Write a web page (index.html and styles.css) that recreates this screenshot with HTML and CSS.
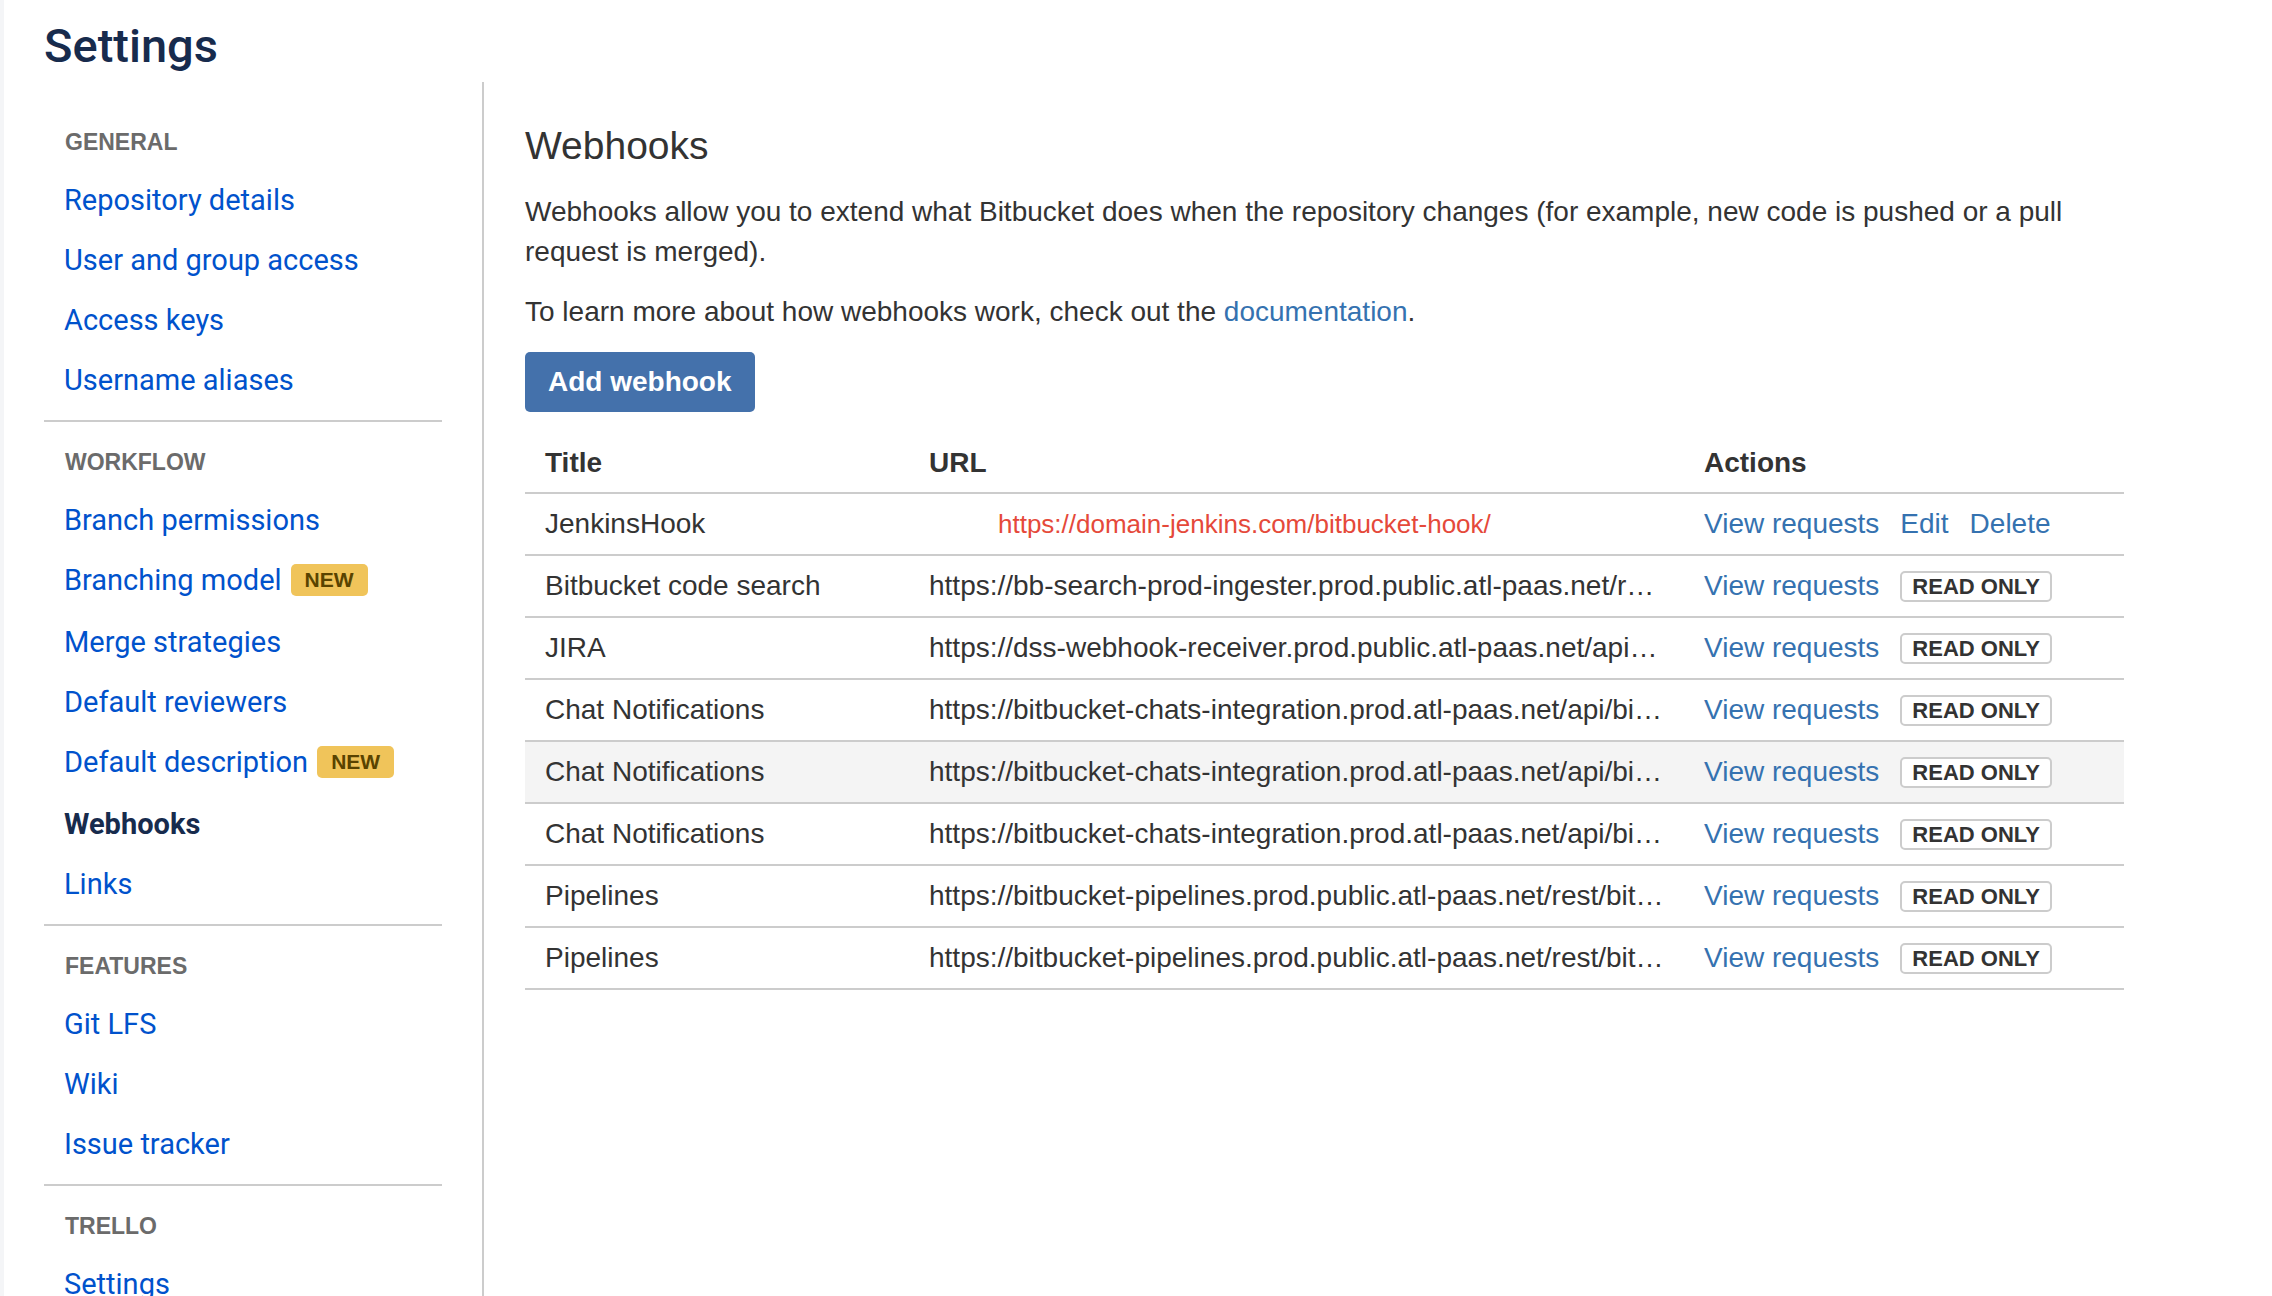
FILE: index.html
```html
<!DOCTYPE html>
<html lang="en">
<head>
<meta charset="utf-8">
<title>Settings - Webhooks</title>
<link rel="stylesheet" href="styles.css">
</head>
<body>
<div class="page">
  <div class="strip"></div>
  <aside class="sidebar">
    <h1 class="sidebar-title">Settings</h1>
    <nav class="nav">
      <div class="nav-section">
        <div class="nav-heading">GENERAL</div>
        <a class="nav-item" href="#">Repository details</a>
        <a class="nav-item" href="#">User and group access</a>
        <a class="nav-item" href="#">Access keys</a>
        <a class="nav-item" href="#">Username aliases</a>
      </div>
      <div class="nav-section">
        <div class="nav-heading">WORKFLOW</div>
        <a class="nav-item" href="#">Branch permissions</a>
        <a class="nav-item nav-item--badge" href="#">Branching model <span class="new-badge">NEW</span></a>
        <a class="nav-item" href="#">Merge strategies</a>
        <a class="nav-item" href="#">Default reviewers</a>
        <a class="nav-item nav-item--badge" href="#">Default description <span class="new-badge">NEW</span></a>
        <a class="nav-item nav-item--active" href="#">Webhooks</a>
        <a class="nav-item" href="#">Links</a>
      </div>
      <div class="nav-section">
        <div class="nav-heading">FEATURES</div>
        <a class="nav-item" href="#">Git LFS</a>
        <a class="nav-item" href="#">Wiki</a>
        <a class="nav-item" href="#">Issue tracker</a>
      </div>
      <div class="nav-section nav-section--last">
        <div class="nav-heading">TRELLO</div>
        <a class="nav-item" href="#">Settings</a>
      </div>
    </nav>
  </aside>
  <main class="main">
    <h2 class="page-heading">Webhooks</h2>
    <p class="text">Webhooks allow you to extend what Bitbucket does when the repository changes (for example, new code is pushed or a pull request is merged).</p>
    <p class="text">To learn more about how webhooks work, check out the <a class="link" href="#">documentation</a>.</p>
    <button class="btn-primary" type="button">Add webhook</button>
    <table class="hooks">
      <colgroup>
        <col class="col-title">
        <col class="col-url">
        <col class="col-actions">
      </colgroup>
      <thead>
        <tr><th>Title</th><th>URL</th><th>Actions</th></tr>
      </thead>
      <tbody>
        <tr>
          <td>JenkinsHook</td>
          <td><span class="url-error">https://domain-jenkins.com/bitbucket-hook/</span></td>
          <td><div class="actions"><a class="link" href="#">View requests</a><a class="link" href="#">Edit</a><a class="link" href="#">Delete</a></div></td>
        </tr>
        <tr>
          <td>Bitbucket code search</td>
          <td><span class="url">https://bb-search-prod-ingester.prod.public.atl-paas.net/r…</span></td>
          <td><div class="actions"><a class="link" href="#">View requests</a><span class="ro-badge">READ ONLY</span></div></td>
        </tr>
        <tr>
          <td>JIRA</td>
          <td><span class="url">https://dss-webhook-receiver.prod.public.atl-paas.net/api…</span></td>
          <td><div class="actions"><a class="link" href="#">View requests</a><span class="ro-badge">READ ONLY</span></div></td>
        </tr>
        <tr>
          <td>Chat Notifications</td>
          <td><span class="url">https://bitbucket-chats-integration.prod.atl-paas.net/api/bi…</span></td>
          <td><div class="actions"><a class="link" href="#">View requests</a><span class="ro-badge">READ ONLY</span></div></td>
        </tr>
        <tr class="row-hover">
          <td>Chat Notifications</td>
          <td><span class="url">https://bitbucket-chats-integration.prod.atl-paas.net/api/bi…</span></td>
          <td><div class="actions"><a class="link" href="#">View requests</a><span class="ro-badge">READ ONLY</span></div></td>
        </tr>
        <tr>
          <td>Chat Notifications</td>
          <td><span class="url">https://bitbucket-chats-integration.prod.atl-paas.net/api/bi…</span></td>
          <td><div class="actions"><a class="link" href="#">View requests</a><span class="ro-badge">READ ONLY</span></div></td>
        </tr>
        <tr>
          <td>Pipelines</td>
          <td><span class="url">https://bitbucket-pipelines.prod.public.atl-paas.net/rest/bit…</span></td>
          <td><div class="actions"><a class="link" href="#">View requests</a><span class="ro-badge">READ ONLY</span></div></td>
        </tr>
        <tr>
          <td>Pipelines</td>
          <td><span class="url">https://bitbucket-pipelines.prod.public.atl-paas.net/rest/bit…</span></td>
          <td><div class="actions"><a class="link" href="#">View requests</a><span class="ro-badge">READ ONLY</span></div></td>
        </tr>
      </tbody>
    </table>
  </main>
</div>
</body>
</html>
```

FILE: styles.css
```css
html, body {
  margin: 0;
  padding: 0;
  height: 100%;
  overflow: hidden;
  background: #ffffff;
}

body {
  font-family: "Liberation Sans", Arial, sans-serif;
  color: #333333;
}

.page {
  display: flex;
  align-items: stretch;
  min-height: 1296px;
}

.strip {
  width: 4px;
  flex: 0 0 4px;
  background: #f4f5f7;
}

/* Sidebar */
.sidebar {
  flex: 0 0 440px;
  width: 440px;
  padding-left: 40px;
  display: flex;
  flex-direction: column;
  font-family: Roboto, "Liberation Sans", sans-serif;
}

.sidebar-title {
  margin: 18px 0 0 0;
  font-size: 47px;
  line-height: 56px;
  font-weight: 500;
  color: #172b4d;
  height: 56px;
}

.nav {
  margin-top: 8px;
  flex: 1;
  border-right: 2px solid #cccccc;
  padding: 45px 40px 0 0;
}

.nav-section {
  border-bottom: 2px solid #cccccc;
  padding-bottom: 10px;
  margin-bottom: 25px;
}

.nav-section--last {
  border-bottom: none;
}

.nav-heading {
  padding-left: 21px;
  font-family: "Liberation Sans", Arial, sans-serif;
  font-size: 23px;
  line-height: 30px;
  font-weight: 700;
  color: #6b6b6b;
  margin-bottom: 13px;
}

.nav-item {
  display: flex;
  align-items: center;
  height: 60px;
  padding-left: 20px;
  font-size: 29px;
  line-height: 60px;
  color: #0052cc;
  text-decoration: none;
  white-space: nowrap;
}

.nav-item--badge {
  padding-bottom: 2px;
}

.nav-item--active {
  color: #172b4d;
  font-weight: 700;
}

.new-badge {
  display: inline-block;
  margin-left: 9px;
  padding: 0 14px;
  height: 32px;
  line-height: 32px;
  border-radius: 5px;
  background: #f0c45a;
  color: #594300;
  font-family: "Liberation Sans", Arial, sans-serif;
  font-size: 21px;
  font-weight: 700;
}

/* Main */
.main {
  flex: 1;
  padding: 122px 0 0 41px;
}

.page-heading {
  margin: 0 0 22px 0;
  font-size: 39px;
  line-height: 48px;
  font-weight: 400;
  color: #333333;
}

.text {
  margin: 0 0 20px 0;
  width: 1600px;
  font-size: 28px;
  line-height: 40px;
  color: #333333;
}

.link {
  color: #3572b0;
  text-decoration: none;
}

.btn-primary {
  display: block;
  height: 60px;
  padding: 0 23px;
  border: none;
  border-radius: 5px;
  background: #4471ab;
  color: #ffffff;
  font-family: "Liberation Sans", Arial, sans-serif;
  font-size: 28px;
  font-weight: 700;
  line-height: 60px;
}

.hooks {
  margin-top: 21px;
  width: 1599px;
  table-layout: fixed;
  border-collapse: separate;
  border-spacing: 0;
  font-size: 28px;
  color: #333333;
}

.col-title { width: 384px; }
.col-url { width: 775px; }
.col-actions { width: 440px; }

.hooks th {
  text-align: left;
  font-weight: 700;
  padding: 0 20px;
  line-height: 59px;
  height: 59px;
  border-bottom: 2px solid #cccccc;
  color: #333333;
}

.hooks td {
  padding: 0 20px;
  height: 60px;
  line-height: 60px;
  border-bottom: 2px solid #cccccc;
  white-space: nowrap;
  overflow: hidden;
}

.row-hover td {
  background: #f4f4f4;
}

.url {
  color: #333333;
}

.url-error {
  display: inline-block;
  padding-left: 69px;
  font-size: 26px;
  color: #e5493a;
}

.actions {
  display: flex;
  align-items: center;
  gap: 21px;
  height: 60px;
}

.ro-badge {
  display: inline-block;
  box-sizing: border-box;
  height: 31px;
  line-height: 27px;
  padding: 0 10px;
  border: 2px solid #cccccc;
  border-radius: 5px;
  background: #ffffff;
  color: #333333;
  font-size: 22px;
  font-weight: 700;
}
```
